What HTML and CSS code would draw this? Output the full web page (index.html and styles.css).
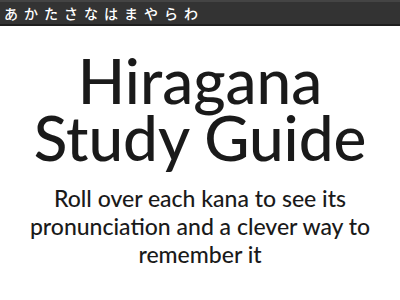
FILE: index.html
```html
<!DOCTYPE html>
<html lang="en">
<head>
  <meta charset="UTF-8" />
  <title>Hiragana Study Guide</title>
  <link rel="stylesheet" href="styles.css">
</head>
<body>

  <nav class="kana-nav">
    <ul class="kana-links">
      <li><a href="#a">あ</a></li>
      <li><a href="#ka">か</a></li>
      <li><a href="#ta">た</a></li>
      <li><a href="#sa">さ</a></li>
      <li><a href="#na">な</a></li>
      <li><a href="#ha">は</a></li>
      <li><a href="#ma">ま</a></li>
      <li><a href="#ya">や</a></li>
      <li><a href="#ra">ら</a></li>
      <li><a href="#wa">わ</a></li>
    </ul>
  </nav>

  <header class="intro">
    <h1>Hiragana Study Guide</h1>
    <p>Roll over each kana to see its pronunciation and a clever way to remember it</p>
  </header>

</body>
</html>
```

FILE: styles.css
```css
body {
  margin: 0;
  padding: 0;
  font-family: 'Lato', 'Noto Sans', sans-serif;
  color: #1a1a1a;
  background: #fff;
}

.kana-nav {
  background-color: #333;
  border-top: 2px solid #444;
  border-bottom: 2px solid #1e1e1e;
  height: 22px;
}

.kana-links {
  display: flex;
  gap: 6px;
  margin: 0;
  padding: 0 0 0 4px;
  list-style: none;
}

.kana-links a {
  display: block;
  color: #fff;
  text-decoration: none;
  font-family: 'Noto Sans CJK JP', sans-serif;
  font-weight: 500;
  font-size: 14px;
  line-height: 22px;
}

.intro {
  text-align: center;
  padding: 0 10px;
}

h1 {
  font-weight: 500;
  font-size: 62px;
  line-height: 57px;
  margin: 26px 0 18px;
}

.intro p {
  font-weight: 500;
  font-size: 23px;
  line-height: 28px;
  margin: 0;
}
```
